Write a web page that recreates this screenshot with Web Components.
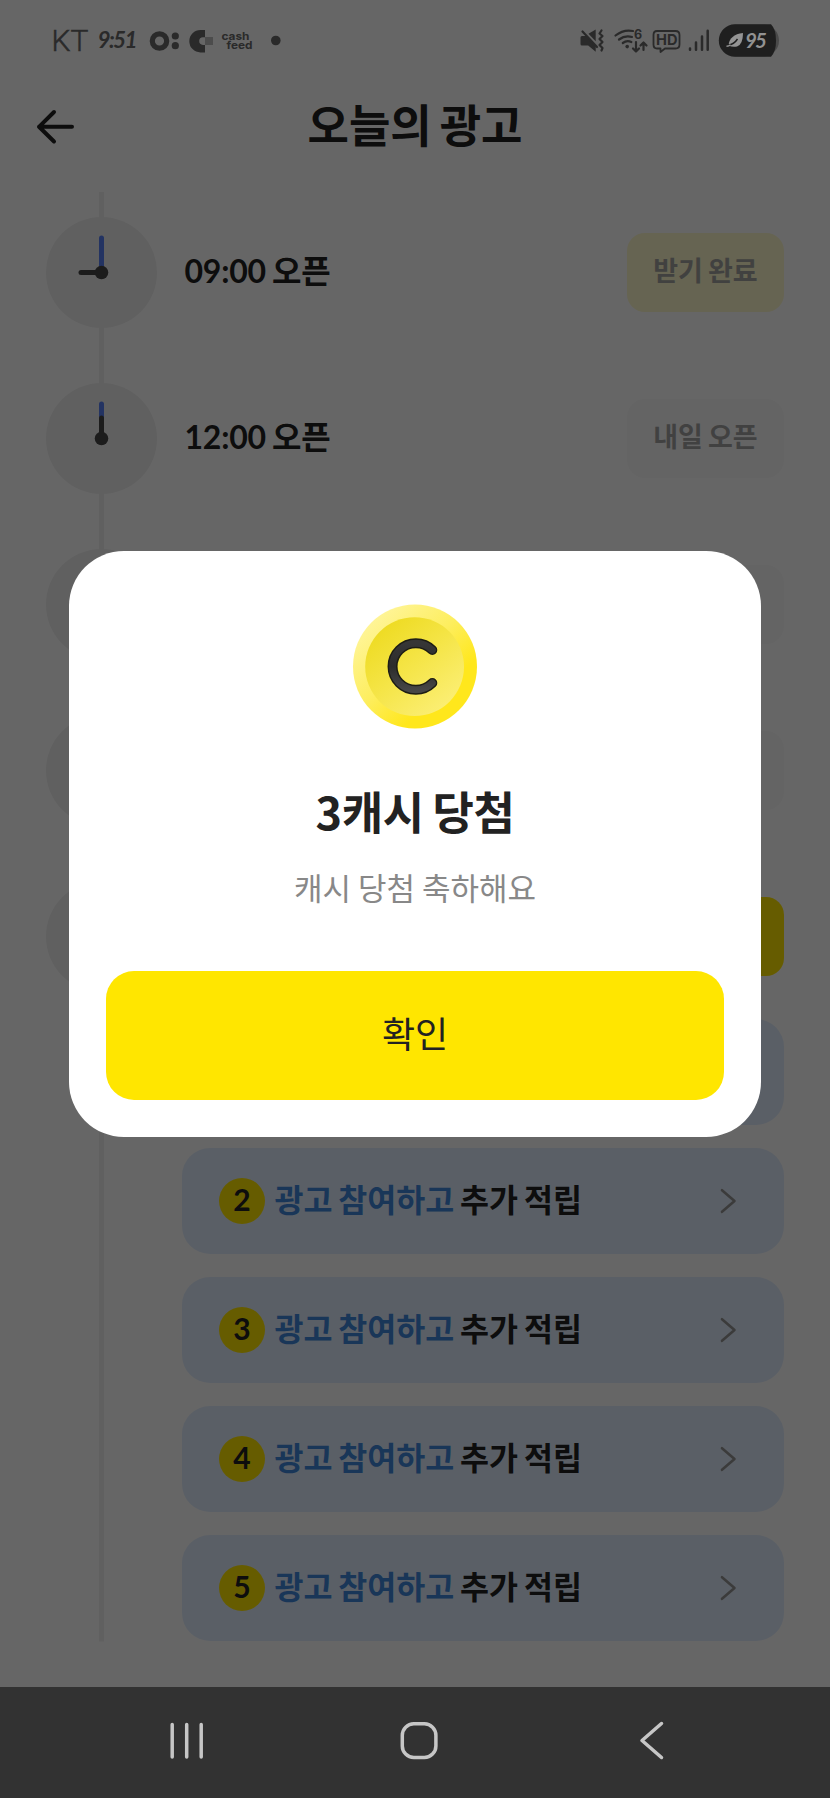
<!DOCTYPE html>
<html lang="ko">
<head>
<meta charset="utf-8">
<title>오늘의 광고</title>
<style>
html,body{margin:0;padding:0;background:#fff}
body{width:830px;height:1798px;overflow:hidden;font-family:Lato,"Noto Sans CJK KR",sans-serif;color:#222}
</style>
</head>
<body>
<ad-screen></ad-screen>
<script>
const define=(name,html,setup)=>{
  const t=document.createElement('template');t.innerHTML=html;
  customElements.define(name,class extends HTMLElement{
    connectedCallback(){
      if(this.shadowRoot)return;
      const r=this.attachShadow({mode:'open'});
      r.append(t.content.cloneNode(true));
      if(setup)setup(this,r);
    }
  });
};

define('status-bar',`
<style>
:host{display:flex;height:82px;box-sizing:border-box;position:relative;z-index:3;color:#2c2c2c}
svg{display:block}
text{font-family:Inter,sans-serif}
</style>
<svg width="830" height="82" viewBox="0 0 830 82" fill="#2a2a2a">
  <text x="51.500" y="51" font-size="30" textLength="37" style="font-family:Roboto,sans-serif;font-weight:300" fill="#2a2a2a" stroke="#2a2a2a" stroke-width=".5">KT</text>
  <text x="97.500" y="47.500" font-size="22.500" textLength="40" style="font-family:Lato,sans-serif;font-style:italic;font-weight:700">9:51</text>
  <circle cx="159.500" cy="41" r="7.200" fill="none" stroke="#2a2a2a" stroke-width="5.200"/>
  <circle cx="175.300" cy="36" r="3.600"/><circle cx="175.300" cy="45.700" r="3.600"/>
  <path d="M205 30v7.300h-2a3.800 3.800 0 0 0 0 7.600h2v7.500h-4.500a11.200 11.200 0 0 1 0-22.400z"/>
  <path d="M205 37h8v8h-8z" fill="#4c4c4c"/>
  <text font-size="11" font-weight="700"><tspan x="221.500" y="40" textLength="28" lengthAdjust="spacingAndGlyphs">cash</tspan><tspan x="226.500" y="49" textLength="26" lengthAdjust="spacingAndGlyphs">feed</tspan></text>
  <circle cx="275.800" cy="40.500" r="4.800"/>
  <path d="M580.500 37.500 q0-1.500 1.500-1.500h4l9.700 10v5.800l-7.500-6.300h-6.200q-1.500 0-1.500-1.500z"/>
  <path d="M588.500 33.800l7.200-4.300v11.700z"/>
  <path d="M582.500 31.500l14.500 15.500" fill="none" stroke="#2a2a2a" stroke-width="2.200" stroke-linecap="round"/>
  <path d="M601.500 30.500l-2 3 3 2.500-3 3 3 3-3 3 3 3-1 2.500" fill="none" stroke="#2a2a2a" stroke-width="2.200" stroke-linecap="round" stroke-linejoin="round"/>
  <g fill="none" stroke="#2a2a2a" stroke-width="2.200" stroke-linecap="round" stroke-linejoin="round">
    <path d="M615.500 35.500q8-6.500 17.500-4.500M619 39.500q6-4.500 13-2.500M622.800 43q4-3 8.500-1"/>
    <path d="M636 42v9.500m-3-3l3 3 3-3M643.500 50v-7.500m-3 3l3-3 3 3"/>
    <path d="M657 31h18.500q4 0 4 4v9.500q0 4-4 4H665l-4.500 3.500v-3.500H657q-3.500 0-3.500-4V35q0-4 3.500-4z" stroke-width="1.800"/>
  </g>
  <circle cx="627.200" cy="46.600" r="1.800"/>
  <text x="634" y="39.300" font-size="12.500" font-weight="700">6</text>
  <text x="656" y="45" font-size="14.500" font-weight="700" textLength="21.500" lengthAdjust="spacingAndGlyphs">HD</text>
  <g stroke="#2a2a2a" stroke-width="2.500" stroke-linecap="round"><path d="M690 48.500v1.300M696 42.500v7.300M702 36.500v13.300M707.700 30.800v19"/></g>
  <rect x="721" y="24.500" width="58" height="32" rx="16" fill="#4a4a4a"/>
  <path d="M735 24.300h36q5 5 5 16.200t-5 16.200h-36a16.200 16.200 0 0 1 0-32.400z" fill="#1f1f1f"/>
  <path d="M728.500 45.500q1-11 14.500-12.500 0 11.500-6 13.500-4.500 1-8.500-1z" fill="#949494"/>
  <path d="M728 45q6-.5 9.500-6" stroke="#1f1f1f" fill="none" stroke-width="1.400"/>
  <path d="M726.500 46.200q2.500 0 4-1.500" stroke="#949494" fill="none" stroke-width="1.400"/>
  <text x="745" y="48" font-size="20.500" textLength="22" fill="#929292" style="font-family:Lato,sans-serif;font-style:italic;font-weight:700">95</text>
</svg>`);

define('page-header',`
<style>
:host{display:grid;grid-template-columns:1fr auto 1fr;align-items:center;height:107px;padding:0 36px;box-sizing:border-box}
svg{display:block;margin-top:-17px}
h1{margin:-20px 0 0;font-size:45px;line-height:66px;font-weight:700;white-space:nowrap;word-spacing:-3px}
</style>
<svg width="40" height="36" viewBox="0 0 40 36" fill="none" stroke="#222" stroke-width="4" stroke-linecap="round" stroke-linejoin="round"><path d="M18 3L3 17.800 18 32.500M3 17.800h33"/></svg>
<h1><slot></slot></h1>`);

define('clock-face',`
<style>
:host{display:block;width:111px;height:111px;border-radius:50%;background:#f0f0f0;flex:none}
svg{display:block}
.hour{transform:rotate(var(--hour-angle,0deg));transform-origin:55.500px 55.500px}
</style>
<svg width="111" height="111" viewBox="0 0 111 111" fill="none" stroke-width="5" stroke-linecap="round">
<path d="M55.500 55V21" stroke="#5880f6"/><path class="hour" d="M55.500 55.500V35" stroke="#484848"/><circle cx="55.500" cy="55.500" r="6.800" fill="#484848"/></svg>`);

define('state-pill',`
<style>
:host{display:flex;align-items:center;justify-content:center;width:157px;height:79px;border-radius:18px;margin-left:auto;background:#fbfbfb;color:#a4a4a4;font-size:27px;line-height:40px;font-weight:700;white-space:nowrap;word-spacing:-1.500px}
:host([kind=done]){background:#fffacc;color:#a4a4a0}
:host([kind=open]){background:#ffe600}
span{display:block;margin-top:-2px}
</style><span><slot></slot></span>`);

define('time-row',`
<style>
:host{display:flex;align-items:center;height:166px;padding:0 46px;box-sizing:border-box;gap:27.500px}
.t{font-size:32px;line-height:48px;font-weight:700;white-space:nowrap;word-spacing:-1.500px;letter-spacing:-.2px;margin-top:-2px}
</style><clock-face></clock-face><span class="t"><slot></slot></span><slot name="pill"></slot>`,
el=>el.style.setProperty('--hour-angle',(+el.getAttribute('hour')%12)*30+'deg'));

define('ad-card',`
<style>
:host{display:flex;align-items:center;height:106px;border-radius:28px;background:#e2eefe;padding:0 47px 0 37px;box-sizing:border-box;font-size:31.500px;font-weight:700;white-space:nowrap}
.n{display:block;width:46px;height:46px;border-radius:50%;background:#ffe600;font-size:30px;line-height:42px;text-align:center;margin-right:9.500px}
.t{display:block;line-height:46px;margin-top:-3px;word-spacing:-1.800px}
b{color:#3f87dc;font-weight:inherit}
svg{display:block;margin-left:auto}
</style><span class="n"><slot name="n"></slot></span><span class="t"><b>광고 참여하고</b> 추가 적립</span>
<svg width="18" height="28" viewBox="0 0 18 28" fill="none" stroke="#949494" stroke-width="2.600" stroke-linecap="round" stroke-linejoin="round"><path d="M3 3.200L15.500 14 3 24.800"/></svg>`);

define('time-line',`
<style>
:host{display:block;height:1498px;background:linear-gradient(#f0f0f0,#f0f0f0) 99px 2.500px/5px 1449.500px no-repeat}
.cards{display:flex;flex-direction:column;gap:23px;margin:0 46px 0 182px}
</style><slot></slot><div class="cards"><slot name="card"></slot></div>`);

define('cash-coin',`
<style>:host{display:block;width:130px;height:130px}svg{display:block}</style>
<svg width="130" height="130" viewBox="350 600 130 130">
<defs>
<linearGradient id="o" x1=".15" y1=".1" x2=".85" y2=".85"><stop offset="0" stop-color="#fff59a"/><stop offset=".45" stop-color="#fdee60"/><stop offset=".8" stop-color="#ffe71c"/></linearGradient>
<linearGradient id="i" x1=".15" y1=".1" x2=".8" y2=".9"><stop offset="0" stop-color="#eedb22"/><stop offset=".5" stop-color="#f5e548"/><stop offset="1" stop-color="#fbee72"/></linearGradient>
<linearGradient id="c" x1="0" y1="0" x2="0" y2="1"><stop offset="0" stop-color="#363636"/><stop offset=".5" stop-color="#2c2c2c"/><stop offset="1" stop-color="#464646"/></linearGradient>
</defs>
<circle cx="415" cy="665.500" r="62" fill="url(#o)"/>
<circle cx="414.600" cy="665.700" r="49.400" fill="url(#i)"/>
<g fill="none" stroke-linecap="round"><path d="M432.300 649A23.300 23.300 0 1 0 432.300 682" stroke="#1d1d14" stroke-width="10"/>
<path d="M432.300 649A23.300 23.300 0 1 0 432.300 682" stroke="url(#c)" stroke-width="7"/></g></svg>`);

define('reward-dialog',`
<style>
:host{display:flex;flex-direction:column;align-items:center;width:692px;height:585.500px;border-radius:55px;background:#fff;padding:49.500px 37px 37px;box-sizing:border-box}
h2{margin:47px 0 0;font-family:"Noto Sans CJK KR",sans-serif;font-size:45px;line-height:66px;font-weight:700;white-space:nowrap;letter-spacing:-.4px;word-spacing:-3.500px}
p{margin:21px 0 0;font-size:31px;line-height:46px;color:#888;white-space:nowrap;word-spacing:-1px}
button{margin:auto 0 0;width:618px;height:128.500px;border:0;border-radius:28px;background:#ffe600;color:#222;font:400 36px/52px "Noto Sans CJK KR",sans-serif;padding:0 0 7px}
</style><cash-coin></cash-coin><h2><slot name="title"></slot></h2><p><slot></slot></p><button><slot name="action"></slot></button>`);

define('modal-scrim',`
<style>:host{position:absolute;inset:0;z-index:2;display:flex;flex-direction:column;align-items:center;box-sizing:border-box;padding-top:551px;background:rgba(0,0,0,.6)}</style><slot></slot>`);

define('nav-bar',`
<style>:host{display:flex;height:111px;position:relative;z-index:3;background:#323232;justify-content:space-between;align-items:center;padding:0 163px 4px 167px;box-sizing:border-box}
svg{display:block;fill:none;stroke:#c6c6c6;stroke-width:3.500;stroke-linecap:round;stroke-linejoin:round}
.home{margin-left:-6px}</style>
<svg width="40" height="44" viewBox="167 1719 40 44"><path d="M172.200 1724.500v32.500M186.700 1724.500v32.500M201.200 1724.500v32.500"/></svg>
<svg class="home" width="44" height="44" viewBox="397 1719 44 44"><rect x="402.300" y="1723.800" width="33.600" height="33.600" rx="11.500"/></svg>
<svg width="30" height="44" viewBox="637 1719 30 44"><path d="M661.500 1723.500L642 1740.500 661.500 1757.500"/></svg>`);

define('ad-screen',`
<style>:host{display:flex;flex-direction:column;width:830px;height:1798px;position:relative;overflow:hidden;background:#fff}</style>
<status-bar></status-bar>
<page-header>오늘의 광고</page-header>
<time-line>
<time-row hour="9">09:00 오픈<state-pill slot="pill" kind="done">받기 완료</state-pill></time-row>
<time-row hour="12">12:00 오픈<state-pill slot="pill">내일 오픈</state-pill></time-row>
<time-row hour="15"><state-pill slot="pill"></state-pill></time-row>
<time-row hour="18"><state-pill slot="pill"></state-pill></time-row>
<time-row hour="21"><state-pill slot="pill" kind="open"></state-pill></time-row>
<empty-card slot="card"></empty-card>
<ad-card slot="card"><span slot="n">2</span></ad-card>
<ad-card slot="card"><span slot="n">3</span></ad-card>
<ad-card slot="card"><span slot="n">4</span></ad-card>
<ad-card slot="card"><span slot="n">5</span></ad-card>
</time-line>
<nav-bar></nav-bar>
<modal-scrim><reward-dialog><span slot="title">3캐시 당첨</span>캐시 당첨 축하해요<span slot="action">확인</span></reward-dialog></modal-scrim>`);

define('empty-card',`<style>:host{display:block;height:106px;border-radius:28px;background:#e2eefe}</style>`);
</script>
</body>
</html>
